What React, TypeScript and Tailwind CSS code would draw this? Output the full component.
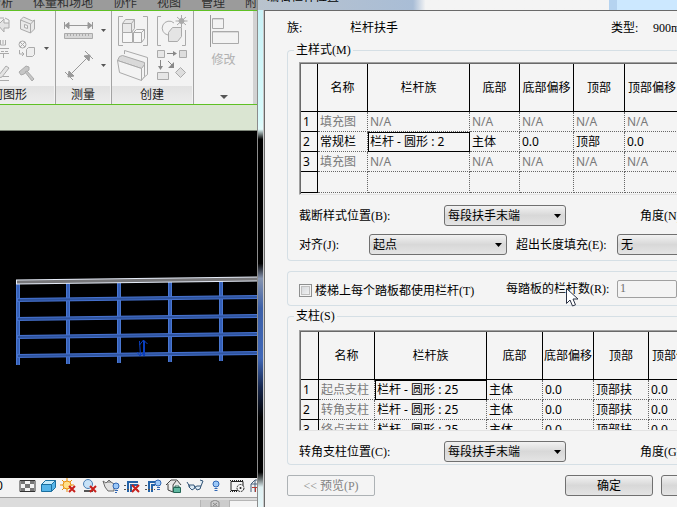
import type { ReactNode } from "react";

type IconProps = {
  w: number;
  h: number;
  children: ReactNode;
};

function Icon({ w, h, children }: IconProps) {
  return (
    <svg
      width={w}
      height={h}
      viewBox={`0 0 ${w} ${h}`}
      fill="none"
      stroke="#aaaaaa"
      aria-hidden="true"
      className="shrink-0"
    >
      {children}
    </svg>
  );
}

type ToolProps = {
  label: string;
  children: ReactNode;
};

function Tool({ label, children }: ToolProps) {
  return (
    <button type="button" aria-label={label} className="flex shrink-0">
      {children}
    </button>
  );
}

function Caret() {
  return (
    <svg width="5" height="3" viewBox="0 0 5 3" aria-hidden="true" className="shrink-0">
      <path d="M0 0h5L2.5 3z" fill="#555555" />
    </svg>
  );
}

const tabs = ["分析", "体量和场地", "协作", "视图", "管理", "附"];

function RibbonTabs() {
  return (
    <nav className="flex h-[10px] shrink-0 flex-col justify-end overflow-hidden bg-[#9b9b9b]">
      <div className="-ml-[11px] flex gap-[20px] whitespace-nowrap text-[12px] leading-[14px] text-[#2f2f2f]">
        {tabs.map((tab) => (
          <a key={tab} href="#" className="shrink-0">
            {tab}
          </a>
        ))}
      </div>
    </nav>
  );
}

type PanelProps = {
  title: string;
  className: string;
  titleClassName?: string;
  children: ReactNode;
};

function Panel({ title, className, titleClassName = "text-center", children }: PanelProps) {
  return (
    <section
      className={`flex shrink-0 flex-col overflow-hidden border-r border-[#a3a3a3] ${className}`}
    >
      <div className="h-[75px]">{children}</div>
      <h2
        className={`mr-px flex-1 bg-linear-to-b from-[#e2e2e2] to-[#ededed] text-[12px] leading-[18px] whitespace-nowrap text-[#222222] ${titleClassName}`}
      >
        {title}
      </h2>
    </section>
  );
}

function GeometryPanel() {
  return (
    <Panel title="几何图形" className="w-[56px]" titleClassName="-ml-[21px] text-left">
      <div className="flex h-full items-center justify-end gap-[8px] pr-[6px]">
        <div className="flex flex-col gap-[6px]">
          <Tool label="连接">
            <Icon w={18} h={18}>
              <path d="M6 9l6-6v4h5v5h-5v4z" fill="#e4e4e4" />
              <path d="M7 5V2h5M17 7V4l-4-2" />
            </Icon>
          </Tool>
          <Tool label="拆分">
            <Icon w={18} h={18}>
              <path d="M1 8.500h16M1 13.500h16" />
              <path d="M1 11.500h16" strokeDasharray="3 1" />
              <path d="M8.500 0v5h5V0M11 0v4M11.500 14v4" />
            </Icon>
          </Tool>
          <Tool label="绘制">
            <Icon w={18} h={18}>
              <path d="M7 11l7-9 3 2-7 9-4 1z" fill="#e4e4e4" />
              <path d="M1 12.500h5M11 12.500h6M3 16.500h14" />
            </Icon>
          </Tool>
        </div>
        <div className="flex flex-col gap-[6px]">
          <Tool label="墙连接">
            <Icon w={18} h={18}>
              <path d="M2.500 4l3-3 9 4 2-1v9l-4 4-10-4z" fill="#e9e9e9" />
              <path d="M2.500 4l10 4v9M12.500 8l4-4" />
              <path d="M6.500 8.500l3 1v3l-3-1z" fill="#f6f6f6" />
            </Icon>
          </Tool>
          <Tool label="连接端切割">
            <Icon w={18} h={18}>
              <circle cx="4.500" cy="4.500" r="3.500" />
              <path d="M2 2l5 5M7 2L2 7M1.500 10v4h4M4 12l2 2-2 2" />
              <path d="M8.500 9.500l2-2h6v7l-2 2h-6z" fill="#eeeeee" />
            </Icon>
          </Tool>
          <Tool label="拆除">
            <Icon w={18} h={18}>
              <path d="M1 8l7-6 3 1v3l-5 4-3 1z" fill="#c6c6c6" />
              <path d="M7 8l7 9 2-2-7-8z" fill="#c6c6c6" />
            </Icon>
          </Tool>
        </div>
        <Caret />
      </div>
    </Panel>
  );
}

function MeasurePanel() {
  return (
    <Panel title="测量" className="w-[56px]">
      <div className="flex h-full flex-col justify-center gap-[10px] pt-[4px] pl-[7px]">
        <button type="button" aria-label="对齐尺寸标注" className="flex items-center gap-[7px]">
          <Icon w={31} h={20}>
            <path d="M3 5.500h25M1.500 2v7M29.500 2v7M6 2.500l-4 3 4 3zM25 2.500l4 3-4 3z" stroke="#999999" fill="#999999" />
            <path d="M1.500 13.500h28v5h-28z" fill="#d6d6d6" />
            <path d="M4.500 14v2M7.500 14v2M10.500 14v2M13.500 14v2M16.500 14v2M19.500 14v2M22.500 14v2M25.500 14v2" />
          </Icon>
          <Caret />
        </button>
        <button type="button" aria-label="测量" className="flex items-center gap-[7px]">
          <Icon w={31} h={31}>
            <path d="M7 25L25 7M2 22l8 8M22 1l8 8" stroke="#999999" />
            <path d="M5 27l1-6 5 5zM27 5l-1 6-5-5z" fill="#999999" stroke="#999999" />
          </Icon>
          <Caret />
        </button>
      </div>
    </Panel>
  );
}

function CreatePanel() {
  return (
    <Panel title="创建" className="w-[82px]">
      <div className="grid h-full grid-cols-2 place-items-center gap-x-[4px] px-[4px] py-[3px]">
        <Tool label="创建组">
          <Icon w={32} h={32}>
            <path d="M6 1.500H1.500v29H6M26 1.500h4.500v29H26" />
            <path d="M5.500 8.500l3-4h9v9l-3 4h-9zM5.500 8.500h9v9M14.500 8.500l3-4" fill="#e9e9e9" />
            <path d="M5.500 17.500h10v10h-10zM16.500 17.500l3-3h8v9l-3 4h-8zM16.500 17.500h8v10M24.500 17.500l3-3" fill="#f6f6f6" />
          </Icon>
        </Tool>
        <Tool label="创建部件">
          <Icon w={32} h={32}>
            <path d="M5 1.500H1.500v29H5M26 30.500h3.500V15" />
            <path d="M18 8a7 7 0 1 0-6 12" />
            <path d="M12.500 17.500l4-5h9v9l-4 5h-9z" fill="#e4e4e4" />
            <circle cx="25.500" cy="6" r="2.500" fill="#aaaaaa" />
            <path d="M25.500 0v12M19.500 6h12M21 2l9 8M30 2l-9 8" />
          </Icon>
        </Tool>
        <Tool label="创建零件">
          <Icon w={34} h={34}>
            <path d="M8.500 6V2.500l23 7v17l-5 4" fill="#f3f3f3" />
            <path d="M1.500 12.500l2-4 3-1 22 7v3l-3 3z" fill="#d9d9d9" />
            <path d="M1.500 12.500l24 8v12l-22-8zM25.500 20.500l3-4v12l-3 4" fill="#f3f3f3" />
          </Icon>
        </Tool>
        <Tool label="创建类似实例">
          <Icon w={32} h={32}>
            <path d="M1.500 1.500h7v7h-7zM1.500 23.500h11v7h-11z" fill="#e6e6e6" />
            <path d="M23.500 1.500h7v7h-7zM24.500 18.500l5 5-5 5-5-5z" fill="#dddddd" />
            <path d="M11 4.500h7M4.500 11v6M12 12l5 5" stroke="#888888" />
            <path d="M17 2l4 2.500L17 7zM2 17h5l-2.500 4zM18 13v6h-6z" fill="#888888" stroke="none" />
          </Icon>
        </Tool>
      </div>
    </Panel>
  );
}

function ModifyPanel() {
  return (
    <section className="flex min-w-0 flex-1 flex-col items-center border-r-4 border-[#d2d2d2]">
      <button type="button" className="flex flex-1 flex-col items-center text-[12px] text-[#b0b0b0]">
        <span className="mt-[4px]">
          <Icon w={30} h={32}>
            <path d="M1.500 0v32" stroke="#999999" />
            <path d="M3.500 3.500h11v10h-11zM3.500 16.500h26v12h-26z" fill="#f3f3f3" />
            <path d="M4 4.500h10M4 17.500h25" stroke="#dadada" />
          </Icon>
        </span>
        <span className="mt-[5px] leading-[16px]">修改</span>
      </button>
      <span className="mb-[5px]">
        <svg width="8" height="4" viewBox="0 0 8 4" aria-hidden="true">
          <path d="M0 0h8L4 4z" fill="#555555" />
        </svg>
      </span>
    </section>
  );
}

function RailingView() {
  const posts = [
    { x: 16, top: 283, bottom: 365 },
    { x: 66, top: 282, bottom: 364 },
    { x: 117, top: 282, bottom: 363 },
    { x: 168, top: 281, bottom: 362 },
    { x: 219, top: 280, bottom: 361 },
  ];
  const rails = [300, 319, 337, 356];

  return (
    <main className="min-h-0 flex-1 overflow-hidden bg-black">
      <svg width="257" height="346" viewBox="0 131 257 346" role="img" aria-label="栏杆扶手">
        {posts.map((p) => (
          <g key={p.x}>
            <rect x={p.x} y={p.top} width="4" height={p.bottom - p.top} fill="#4a77d0" />
            <rect x={p.x + 1} y={p.top} width="2" height={p.bottom - p.top} fill="#3560b8" />
          </g>
        ))}
        {rails.map((y) => (
          <g key={y}>
            <path d={`M16 ${y}L257 ${y - 3}`} stroke="#4672cf" strokeWidth="4" />
            <path d={`M18 ${y}L257 ${y - 3}`} stroke="#2f549f" strokeWidth="2" />
          </g>
        ))}
        <path d="M16 282L257 279" stroke="#e6ecf8" strokeWidth="5" />
        <path d="M17 282L257 279" stroke="#77777a" strokeWidth="3" />
        <path
          d="M139.500 341l1 15M137 352l3 4 3-3M143.500 356v-16M139.500 345l4-5 4 4M144.500 341v15"
          stroke="#0a3fc0"
          fill="none"
        />
      </svg>
    </main>
  );
}

function ViewBar() {
  return (
    <div className="flex h-[19px] shrink-0 items-start overflow-hidden bg-[#f3f3f3] text-[12px] text-black">
      <span className="-ml-[4px] w-[22px] shrink-0 leading-[16px]">0</span>
      <div className="flex shrink-0 gap-[3px]">
        <Tool label="详细程度">
          <Icon w={18} h={16}>
            <path d="M2 2.500h15v11H2z" fill="#f4f4f4" stroke="#333333" />
            <path d="M3 3h4v3H3zM12 3h4v3h-4zM7 6h5v4H7zM3 10h4v3H3zM12 10h4v3h-4z" fill="#777777" stroke="none" />
          </Icon>
        </Tool>
        <Tool label="视觉样式">
          <Icon w={18} h={16}>
            <path d="M2.500 6.500l4-4h10v7l-4 4h-10z" fill="#55b4e8" stroke="#1b6f9f" />
            <path d="M2.500 6.500l4-4h10l-4 4z" fill="#c5ebfb" stroke="#1b6f9f" />
            <path d="M12.500 6.500v7" stroke="#1b6f9f" />
          </Icon>
        </Tool>
        <Tool label="关闭日光路径">
          <Icon w={18} h={16}>
            <path d="M7 0v14M0 7h14M2 2l10 10M12 2L2 12" stroke="#e8900c" />
            <circle cx="7" cy="7" r="4" fill="#ffe08a" stroke="#e8900c" />
            <path d="M9 8l6 6M15 8l-6 6" stroke="#c8201c" strokeWidth="2" />
          </Icon>
        </Tool>
        <Tool label="关闭阴影">
          <Icon w={18} h={16}>
            <path d="M3 13h9" stroke="#555555" strokeWidth="2" />
            <circle cx="7" cy="6" r="4.500" fill="#c7e2f7" stroke="#4a7fb4" />
            <path d="M9 8l6 6M15 8l-6 6" stroke="#c8201c" strokeWidth="2" />
          </Icon>
        </Tool>
        <Tool label="显示渲染对话框">
          <Icon w={18} h={16}>
            <path d="M4 5L1 3l2 6 3 4h6V6L9 4H5zM5 4l2-2 2 2" fill="#e2e2e2" stroke="#6b6b6b" />
            <circle cx="14" cy="8" r="3" fill="#9cc8f7" stroke="#3067b5" />
            <path d="M13 12.500h3M13 14.500h2" stroke="#3067b5" />
          </Icon>
        </Tool>
        <Tool label="不裁剪视图">
          <Icon w={18} h={16}>
            <path d="M5 14V4h10M8 14V7h7" stroke="#2463a8" strokeWidth="2" />
            <path d="M1 11.500h14M1 7.500h3" stroke="#555555" strokeDasharray="2 1" />
            <path d="M9 7l7 7M16 7l-7 7" stroke="#c8201c" strokeWidth="2" />
          </Icon>
        </Tool>
        <Tool label="显示裁剪区域">
          <Icon w={18} h={16}>
            <path d="M5 14V4h6M8 14V7h3" stroke="#2463a8" strokeWidth="2" />
            <path d="M1 11.500h10M1 7.500h3" stroke="#555555" strokeDasharray="2 1" />
            <circle cx="14" cy="5" r="3" fill="#9cc8f7" stroke="#3067b5" />
            <path d="M13 9.500h3M13 11.500h3" stroke="#3067b5" />
          </Icon>
        </Tool>
        <Tool label="锁定的三维视图">
          <Icon w={18} h={16}>
            <path d="M1 7l5-5h6l4 5M3 6v6l5 2M8 14V7l3-4" fill="#e6e6e6" stroke="#444444" />
            <path d="M10 10V8h4v2" stroke="#226655" />
            <path d="M8.500 9.500h7v5h-7z" fill="#5fb7a0" stroke="#226655" />
          </Icon>
        </Tool>
        <Tool label="临时隐藏">
          <Icon w={18} h={16}>
            <path d="M1 4l3 5M3 7h5l1 3-3 2-3-3zM9 9l2-1h4l-1 3-3 1-2-3M15 8l2-5-3-1" fill="#dceaf5" stroke="#335577" />
          </Icon>
        </Tool>
        <Tool label="显示隐藏的图元">
          <Icon w={18} h={16}>
            <circle cx="9" cy="6" r="3" fill="#9cc8f7" stroke="#3067b5" />
            <path d="M7.500 10.500h3M7.500 12.500h3" stroke="#3067b5" />
          </Icon>
        </Tool>
        <Tool label="临时视图属性">
          <Icon w={18} h={16}>
            <path d="M3 3.500h12v9H3z" stroke="#222222" />
            <path d="M2 2.500h13M2 13.500h7" stroke="#222222" strokeDasharray="1 1" />
            <circle cx="12.500" cy="10" r="3.500" fill="#f3f3f3" stroke="#222222" strokeDasharray="2 1" />
            <circle cx="12.500" cy="10" r="1" fill="#222222" stroke="none" />
          </Icon>
        </Tool>
        <Tool label="分析模型">
          <Icon w={18} h={16}>
            <path d="M2 14V6l4-4h10v12M2 6h14M6 2v12M11 2v12" stroke="#46607c" />
            <path d="M3 9.500h13M6.500 9v5M11.500 9v5" stroke="#b43a32" />
          </Icon>
        </Tool>
      </div>
    </div>
  );
}

function MainWindow() {
  return (
    <div className="flex w-[257px] shrink-0 flex-col overflow-hidden">
      <RibbonTabs />
      <div className="flex h-[95px] shrink-0 border-y border-[#5fc024] bg-[#f3f3f3]">
        <GeometryPanel />
        <MeasurePanel />
        <CreatePanel />
        <ModifyPanel />
      </div>
      <div className="h-[26px] shrink-0 border-b border-[#7d8578] bg-[#dae5d2]" />
      <RailingView />
      <ViewBar />
      <footer className="flex h-[10px] shrink-0 justify-end border-t border-[#a0a0a0] bg-[#dcdcdc] pt-[2px]">
        <span className="flex w-[29px] justify-center border-l border-[#b5b5b5] bg-[#cccccc]">
          <Icon w={10} h={7}>
            <path d="M1 2l4-2 4 2v5H1zM3 3l4 3M7 3L3 6" stroke="#8a8a8a" />
          </Icon>
        </span>
        <span className="w-[28px] border-t border-l border-[#b5b5b5] bg-[#f4f4f4]" />
      </footer>
    </div>
  );
}

type Cell = string | { text: string; muted?: boolean; active?: boolean };

type GridProps = {
  label: string;
  columns: { title: string; width: string }[];
  rows: Cell[][];
  className: string;
};

function DataGrid({ label, columns, rows, className }: GridProps) {
  return (
    <div
      className={`overflow-hidden border-t border-b border-l border-t-[#a0a0a0] border-b-[#e3e3e3] border-l-[#a0a0a0] ${className}`}
    >
      <div className="h-full border-t border-l border-[#696969]">
        <table
          aria-label={label}
          className="w-max table-fixed border-separate border-spacing-0 text-[12px] leading-[16px] whitespace-nowrap text-black"
        >
          <thead>
            <tr className="h-[48px]">
              {columns.map((column, i) => (
                <th
                  key={i}
                  className={`border-r border-b border-black text-center font-normal ${column.width}`}
                >
                  {column.title}
                </th>
              ))}
            </tr>
          </thead>
          <tbody>
            {rows.map((row, r) => (
              <tr key={r} className="h-[20px] last:h-[21px]">
                {row.map((cell, c) => {
                  const data = typeof cell === "string" ? { text: cell } : cell;
                  return (
                    <td
                      key={c}
                      className={`overflow-hidden border-r border-b pl-[2px] ${
                        c === 0 ? "border-black" : "border-dotted border-[#666666]"
                      } ${data.muted ? "text-[#7a7a7a]" : ""} ${
                        data.active ? "outline-1 -outline-offset-1 outline-black" : ""
                      }`}
                    >
                      {data.text}
                    </td>
                  );
                })}
              </tr>
            ))}
          </tbody>
        </table>
      </div>
    </div>
  );
}

const na = { text: "N/A", muted: true };

const mainColumns = [
  { title: "", width: "w-[17px] min-w-[17px]" },
  { title: "名称", width: "w-[50px] min-w-[50px]" },
  { title: "栏杆族", width: "w-[102px] min-w-[102px]" },
  { title: "底部", width: "w-[50px] min-w-[50px]" },
  { title: "底部偏移", width: "w-[54px] min-w-[54px]" },
  { title: "顶部", width: "w-[51px] min-w-[51px]" },
  { title: "顶部偏移", width: "w-[55px] min-w-[55px]" },
];

const mainRows: Cell[][] = [
  ["1", { text: "填充图", muted: true }, na, na, na, na, na],
  ["2", "常规栏", { text: "栏杆 - 圆形 : 2", active: true }, "主体", "0.0", "顶部", "0.0"],
  ["3", { text: "填充图", muted: true }, na, na, na, na, na],
  ["", "", "", "", "", "", ""],
];

const postColumns = [
  { title: "", width: "w-[18px] min-w-[18px]" },
  { title: "名称", width: "w-[56px] min-w-[56px]" },
  { title: "栏杆族", width: "w-[112px] min-w-[112px]" },
  { title: "底部", width: "w-[56px] min-w-[56px]" },
  { title: "底部偏移", width: "w-[51px] min-w-[51px]" },
  { title: "顶部", width: "w-[55px] min-w-[55px]" },
  { title: "顶部偏移", width: "w-[55px] min-w-[55px]" },
];

const postRows: Cell[][] = [
  ["1", { text: "起点支柱", muted: true }, { text: "栏杆 - 圆形 : 25", active: true }, "主体", "0.0", "顶部扶", "0.0"],
  ["2", { text: "转角支柱", muted: true }, "栏杆 - 圆形 : 25", "主体", "0.0", "顶部扶", "0.0"],
  ["3", { text: "终点支柱", muted: true }, "栏杆 - 圆形 : 25", "主体", "0.0", "顶部扶", "0.0"],
];

type DropdownProps = {
  id: string;
  value: string;
  className: string;
};

function Dropdown({ id, value, className }: DropdownProps) {
  return (
    <span className={`relative flex h-[21px] shrink-0 ${className}`}>
      <select
        id={id}
        className="w-full appearance-none rounded-[3px] border border-[#707070] bg-linear-to-b from-[#f2f2f2] via-[#d8d8d8] to-[#e4e4e4] pl-[3px] text-[12px] leading-[16px] text-black"
      >
        <option>{value}</option>
      </select>
      <svg
        width="7"
        height="4"
        viewBox="0 0 7 4"
        aria-hidden="true"
        className="pointer-events-none absolute top-[9px] right-[5px]"
      >
        <path d="M0 0h7L3.500 4z" fill="#000000" />
      </svg>
    </span>
  );
}

type GroupProps = {
  legend: string;
  className: string;
  children: ReactNode;
};

function Group({ legend, className, children }: GroupProps) {
  return (
    <fieldset className={`rounded-l-[4px] border border-r-0 border-[#d5dfe5] pl-[11px] ${className}`}>
      <legend className="-ml-[5px] px-[2px]">{legend}</legend>
      {children}
    </fieldset>
  );
}

function DialogBody() {
  return (
    <form className="min-w-0 flex-1 overflow-hidden border-t border-l border-[#696969] bg-[#f4f4f4] pt-[9px] pl-[22px] font-['Liberation_Serif','Noto_Sans_CJK_SC',serif] text-[12px] leading-[16px] whitespace-nowrap text-black">
      <div className="flex">
        <span className="w-[63px] shrink-0">族:</span>
        <span className="w-[261px] shrink-0">栏杆扶手</span>
        <span className="w-[42px] shrink-0">类型:</span>
        <span className="shrink-0">900mm</span>
      </div>

      <Group legend="主样式(M)" className="mt-[6px] pb-[5px]">
        <DataGrid
          label="主样式"
          columns={mainColumns}
          rows={mainRows}
          className="mt-[4px] h-[133px] font-['Noto_Sans','Noto_Sans_CJK_SC',sans-serif]"
        />
        <div className="mt-[10px] flex items-center">
          <label htmlFor="break-position" className="w-[145px] shrink-0">
            截断样式位置(B):
          </label>
          <Dropdown id="break-position" value="每段扶手末端" className="w-[122px]" />
          <span className="ml-[74px] shrink-0">角度(N):</span>
        </div>
        <div className="mt-[8px] flex items-center">
          <label htmlFor="justify" className="w-[70px] shrink-0">
            对齐(J):
          </label>
          <Dropdown id="justify" value="起点" className="w-[138px]" />
          <label htmlFor="excess-fill" className="ml-[9px] w-[101px] shrink-0">
            超出长度填充(E):
          </label>
          <Dropdown id="excess-fill" value="无" className="w-[120px]" />
        </div>
      </Group>

      <div className="mt-[10px] flex h-[35px] items-center rounded-l-[4px] border border-r-0 border-[#d5dfe5] pl-[11px]">
        <div className="flex w-[207px] shrink-0 items-center gap-[3px] pt-[4px]">
          <input
            id="per-tread"
            type="checkbox"
            className="size-[13px] shrink-0 appearance-none border border-[#8e8f8f] bg-linear-to-br from-[#cfd2d6] to-[#f8f8f8] shadow-[inset_0_0_0_1px_#f4f4f4,inset_0_0_0_2px_#c0c0c0]"
          />
          <label htmlFor="per-tread">楼梯上每个踏板都使用栏杆(T)</label>
        </div>
        <label htmlFor="per-tread-count" className="relative w-[111px] shrink-0">
          每踏板的栏杆数(R):
          <svg
            width="13"
            height="20"
            viewBox="0 0 13 20"
            aria-hidden="true"
            className="absolute top-[7px] left-[60px]"
          >
            <path
              d="M0.500 0.500v15l3.500-3.500 2.500 6 3-1.200-2.500-5.800h5z"
              fill="#ffffff"
              stroke="#2b3244"
            />
          </svg>
        </label>
        <input
          id="per-tread-count"
          type="text"
          defaultValue="1"
          disabled
          className="h-[18px] w-[60px] shrink-0 rounded-[2px] border border-[#a0a0a0] bg-[#f4f4f4] pl-[2px] text-[#6d6d6d]"
        />
      </div>

      <Group legend="支柱(S)" className="mt-[2px] pb-[2px]">
        <DataGrid
          label="支柱"
          columns={postColumns}
          rows={postRows}
          className="mt-[6px] h-[101px] font-['Noto_Sans','Noto_Sans_CJK_SC',sans-serif]"
        />
        <div className="mt-[10px] flex items-center">
          <label htmlFor="corner-position" className="w-[145px] shrink-0">
            转角支柱位置(C):
          </label>
          <Dropdown id="corner-position" value="每段扶手末端" className="w-[122px]" />
          <span className="ml-[74px] shrink-0">角度(G):</span>
        </div>
      </Group>

      <div className="mt-[10px] flex h-[21px]">
        <button
          type="button"
          disabled
          className="w-[88px] shrink-0 rounded-[2px] border border-[#adb2b5] bg-[#f4f4f4] text-[#838383]"
        >
          &lt;&lt; 预览(P)
        </button>
        <button
          type="button"
          className="ml-[190px] w-[88px] shrink-0 rounded-[3px] border border-[#707070] bg-linear-to-b from-[#f2f2f2] via-[#d8d8d8] to-[#e4e4e4]"
        >
          确定
        </button>
        <button
          type="button"
          aria-label="取消"
          className="ml-[8px] w-[88px] shrink-0 rounded-[3px] border border-[#707070] bg-linear-to-b from-[#f2f2f2] via-[#d8d8d8] to-[#e4e4e4]"
        />
      </div>
    </form>
  );
}

function RailingDialog() {
  return (
    <div className="flex min-w-0 flex-1 flex-col border-l border-[#8c8c8c]">
      <header className="flex h-[10px] shrink-0 items-start justify-between overflow-hidden bg-linear-to-r from-[#b9c3cd] from-0% via-[#a9bdd6] via-37% to-[#f4f4f4] to-40%">
        <h1 className="-mt-[11px] pl-[9px] text-[12px] leading-[16px] whitespace-nowrap text-black">
          编辑栏杆位置
        </h1>
        <div className="h-full w-[68px] shrink-0 border-l-8 border-[#b5d3f0] bg-[#cce8ff]" />
      </header>
      <div className="flex min-h-0 flex-1">
        <div className="w-[6px] shrink-0 border-r border-[#c9c9c9] bg-[linear-gradient(#c9f1f6_0%,#d8fbfc_22%,#e4fbfb_24%,#000_26%,#000_51%,#8795b0_54%,#3c60a8_60%,#4068b8_70%,#16264c_76%,#000_82%,#000_93%,#dff0f2_96%,#e6f6f8_100%)]" />
        <DialogBody />
      </div>
    </div>
  );
}

export default function App() {
  return (
    <div className="flex h-screen overflow-hidden bg-black font-['Noto_Sans','Noto_Sans_CJK_SC',sans-serif]">
      <MainWindow />
      <RailingDialog />
    </div>
  );
}
